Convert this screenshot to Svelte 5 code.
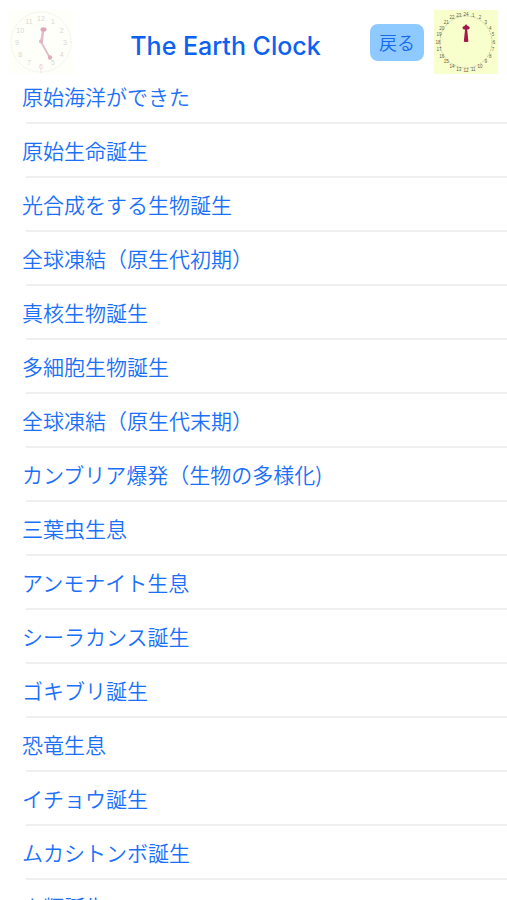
<script>
  const events = [
    "原始海洋ができた",
    "原始生命誕生",
    "光合成をする生物誕生",
    "全球凍結（原生代初期）",
    "真核生物誕生",
    "多細胞生物誕生",
    "全球凍結（原生代末期）",
    "カンブリア爆発（生物の多様化)",
    "三葉虫生息",
    "アンモナイト生息",
    "シーラカンス誕生",
    "ゴキブリ誕生",
    "恐竜生息",
    "イチョウ誕生",
    "ムカシトンボ誕生",
    "人類誕生",
  ];

  // Numbers placed clockwise on a circle, the last one at the top
  function dial(count, radius) {
    return Array.from({ length: count }, (_, i) => {
      const angle = ((i + 1) / count) * Math.PI * 2;
      return {
        n: i + 1,
        x: 32 + Math.sin(angle) * radius,
        y: 32 - Math.cos(angle) * radius,
      };
    });
  }

  const hours12 = dial(12, 24);
  const hours24 = dial(24, 28);
</script>

<div class="screen">
  <header>
    <svg class="clock" viewBox="0 0 64 64" role="img" aria-label="12時間時計">
      <rect width="64" height="64" fill="#fffffa" />
      <circle cx="32" cy="32" r="30" fill="none" stroke="#e8e8e4" stroke-dasharray="1.2 1.4" />
      {#each hours12 as h}
        <text x={h.x} y={h.y + 2.5} font-size="7" fill={h.n === 6 ? "#f2c4d2" : "#d8d8d0"}>{h.n}</text>
      {/each}
      <path d="M32 58v5" stroke="#f6dfe5" />
      <path d="M32 32l9 16" stroke="#dfbcc8" stroke-width="1.8" />
      <path d="M31 32l2-12h2.4l-1.4 12z" fill="#e3bdc9" />
      <ellipse cx="34.5" cy="19.5" rx="3" ry="2.2" fill="#dba6b7" />
      <circle cx="32" cy="31.5" r="2" fill="#e0b5c3" />
      <circle cx="41" cy="47.5" r="2.2" fill="#e0adbd" />
    </svg>

    <h1>The Earth Clock</h1>

    <button type="button">戻る</button>

    <svg class="clock" viewBox="0 0 64 64" role="img" aria-label="24時間時計">
      <rect width="64" height="64" fill="#f8ffcc" />
      <circle cx="32" cy="32" r="26" fill="none" stroke="#b9bea0" stroke-width="0.8" stroke-dasharray="2.4 1" />
      {#each hours24 as h}
        <text x={h.x} y={h.y + 1.6} font-size="4.5" fill="#5d6048">{h.n}</text>
      {/each}
      <path d="M31.2 18h1.8l1.4 13.5q-2.3 1-4.6 0z" fill="#a5164c" />
      <path d="M28.4 17.5q.8-1.8 2.2-1.6q1.5-2.8 3 0q1.4-.2 2.2 1.6q-.4 2.4-2.4 1.9q-1.3.8-2.6 0q-2 .5-2.4-1.9z" fill="#a5164c" />
    </svg>
  </header>

  <ul>
    {#each events as name}
      <li><a href="#detail">{name}</a></li>
    {/each}
  </ul>
</div>

<style>
  :global(body) {
    margin: 0;
    background: #fff;
    font-family: Inter, "Noto Sans CJK JP", sans-serif;
  }

  .screen {
    display: flex;
    flex-direction: column;
    height: 100vh;
    overflow: hidden;
  }

  header {
    display: flex;
    flex: none;
    align-items: center;
    padding: 10px 9px 0;
  }

  .clock {
    flex: none;
    width: 64px;
    height: 64px;
  }

  .clock text {
    text-anchor: middle;
    font-family: "Liberation Sans", sans-serif;
  }

  h1 {
    flex: 1;
    margin: 8px 0 0 8px;
    font-size: 25px;
    line-height: 32px;
    font-weight: 500;
    color: #0b62f0;
    text-align: center;
  }

  button {
    margin-right: 10px;
    padding: 0 9px;
    border: 0;
    border-radius: 8px;
    background: #8ecaff;
    color: #1769ee;
    font-family: "Noto Sans CJK JP", sans-serif;
    font-size: 18px;
    font-weight: 350;
    line-height: 37px;
  }

  ul {
    flex: 1;
    min-height: 0;
    margin: -4px 0 0;
    padding: 0 0 0 26px;
    overflow-y: auto;
    scrollbar-width: none;
    list-style: none;
  }

  li {
    border-bottom: 2px solid #efeff0;
  }

  a {
    display: block;
    margin-left: -4px;
    padding: 11px 0;
    color: #1a70f8;
    font-family: "Noto Sans CJK JP", sans-serif;
    font-size: 21px;
    font-weight: 350;
    line-height: 30px;
    text-decoration: none;
  }
</style>
